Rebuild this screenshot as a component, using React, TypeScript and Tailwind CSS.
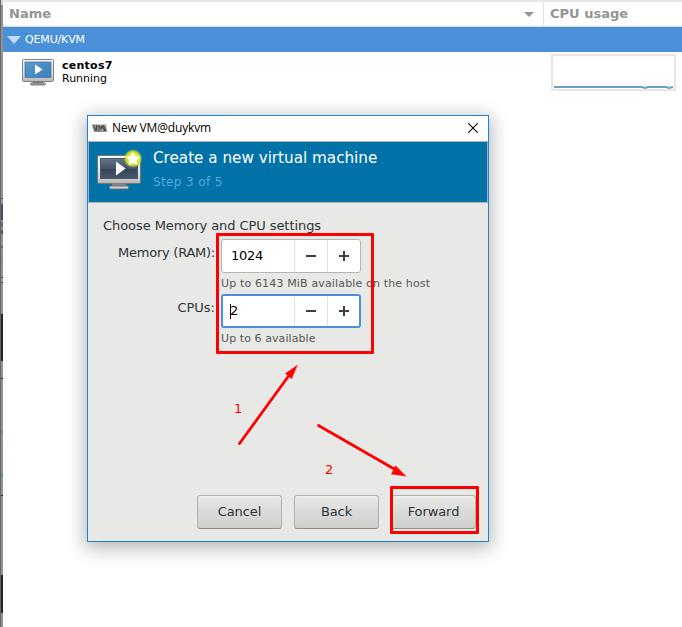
import React from "react";

const edgeMarks = [
  { top: 0, height: 5, color: "#d8d8d8" },
  { top: 198, height: 1, color: "#55555f" },
  { top: 204, height: 16, color: "#4a4b67" },
  { top: 222, height: 5, color: "#62647c" },
  { top: 230, height: 4, color: "#555773" },
  { top: 246, height: 2, color: "#64647b" },
  { top: 250, height: 17, color: "#858e97" },
  { top: 277, height: 1, color: "#1d4d68" },
  { top: 282, height: 1, color: "#1d4d68" },
  { top: 314, height: 47, color: "#252525" },
  { top: 378, height: 1, color: "#252525" },
  { top: 431, height: 3, color: "#5b8e98" },
  { top: 473, height: 4, color: "#5b8e98" },
  { top: 495, height: 1, color: "#252525" },
  { top: 575, height: 38, color: "#252525" },
];

function Monitor({ fresh = false }: { fresh?: boolean }) {
  return (
    <svg width={fresh ? 46 : 32} height={fresh ? 41 : 28} viewBox={fresh ? "0 0 46 41" : "0 0 32 28"} className="block shrink-0">
      <defs>
        <linearGradient id="bezel" x1="0" y1="0" x2="0" y2="1">
          <stop offset="0" stopColor="#f5f5f3" />
          <stop offset=".7" stopColor="#dddddc" />
          <stop offset="1" stopColor="#b4b4b2" />
        </linearGradient>
        <linearGradient id="dark" x1="0" y1="0" x2="0" y2="1">
          <stop offset="0" stopColor="#65758a" />
          <stop offset=".5" stopColor="#46536a" />
          <stop offset=".55" stopColor="#39465a" />
          <stop offset="1" stopColor="#46546a" />
        </linearGradient>
        <linearGradient id="blue" x1="0" y1="0" x2="1" y2="1">
          <stop offset="0" stopColor="#5b9bcc" />
          <stop offset="1" stopColor="#397eb9" />
        </linearGradient>
        <radialGradient id="glow">
          <stop offset=".45" stopColor="#f1ef35" />
          <stop offset=".75" stopColor="#d4df27" stopOpacity=".9" />
          <stop offset="1" stopColor="#a4c943" stopOpacity="0" />
        </radialGradient>
      </defs>
      {fresh ? (
        <>
          <rect x=".5" y="6.5" width="43" height="28" rx="1.5" fill="url(#bezel)" stroke="#73777b" />
          <rect x="3.5" y="9.500" width="37" height="20" fill="url(#dark)" stroke="#4a586c" />
          <path d="M19 12.500L28.5 19.500L19 26.500Z" fill="#fff" />
          <rect x="15" y="34.500" width="14" height="3" fill="#85878a" />
          <rect x="12.5" y="37" width="19" height="3" rx="1" fill="#d2d2d0" stroke="#6f7275" />
          <circle cx="36" cy="9.500" r="9.5" fill="url(#glow)" />
          <path d="M36 3.600L38 7.500L42.2 8.200L39.200 11.200L40 15.500L36 13.500L32 15.500L32.800 11.200L29.800 8.200L34 7.500Z" fill="#fffff4" stroke="#fffff4" strokeLinejoin="round" />
        </>
      ) : (
        <>
          <rect x=".5" y="1.5" width="31" height="22" rx="1.2" fill="url(#bezel)" stroke="#7f8182" />
          <rect x="3" y="4" width="26" height="15.5" fill="url(#blue)" stroke="#3d7bad" strokeWidth=".8" />
          <path d="M13 6.500L20.500 11.500L13 16.500Z" fill="#fff" />
          <rect x="11" y="23.5" width="10" height="2" fill="#777" />
          <rect x="8.5" y="25" width="15" height="2" rx="1" fill="#aaa" stroke="#777" />
        </>
      )}
    </svg>
  );
}

function Spin({ value, focused = false }: { value: string; focused?: boolean }) {
  return (
    <div className={`flex h-[34px] w-[140px] overflow-hidden rounded-[3px] bg-white ${focused ? "border-2 border-[#4a90d9]" : "border border-[#b6b6b3]"}`}>
      <div className={`flex flex-1 items-center text-[13px] tracking-[-0.3px] text-black ${focused ? "pl-[7px]" : "pl-[9px]"}`}>
        {focused && <span className="-mr-px h-[15px] w-px bg-black" />}
        {value}
      </div>
      <div className="flex w-[33px] items-center justify-center border-l border-[#e2e2e0]">
        <span className="h-[2px] w-[10px] bg-[#3b4347]" />
      </div>
      <div className={`flex items-center justify-center border-l border-[#e2e2e0] ${focused ? "w-[32px]" : "w-[33px]"}`}>
        <svg width="10" height="10" shapeRendering="crispEdges"><path d="M0 5H10M5 0V10" stroke="#3b4347" strokeWidth="2" /></svg>
      </div>
    </div>
  );
}

function Button({ children }: { children: string }) {
  return (
    <button className="h-[34px] w-[85px] rounded-[3px] border border-[#b0b0ad] border-b-[#8f8f8c] bg-linear-to-b from-[#e8e8e6] to-[#cececc] pb-[2px] text-[13px] leading-none tracking-[-0.1px] text-[#2e3436] shadow-[inset_0_1px_0_#f1f1ef]">
      {children}
    </button>
  );
}

function Dialog() {
  return (
    <section className="absolute left-[87px] top-[115px] flex h-[427px] w-[402px] flex-col border border-[#1883d7] bg-[#e8e8e6] shadow-[0_4px_18px_2px_rgba(0,0,0,0.3)]">
      <div className="flex h-[25px] items-center bg-white pb-px pl-[4px] pr-[10px]">
        <svg width="15" height="9" viewBox="0 0 15 9" className="mr-[5px] shrink-0">
          <path d="M0 .5H14L15 8H2Z" fill="#929292" />
          <path d="M1 1L4 7L5 1M7 7V2L9 5L10 2L13 7M11 1L14 7" stroke="#3b3b3b" fill="none" />
          <path d="M6 3L8 6" stroke="#a66b70" />
        </svg>
        <span className="flex-1 font-['Open_Sans','Noto_Sans',sans-serif] text-[12px] leading-none tracking-[-0.15px] text-black">New VM@duykvm</span>
        <svg width="10" height="10"><path d="M.3 .3L9.7 9.7M9.7 .3L.3 9.7" stroke="#000" strokeWidth="1.1" /></svg>
      </div>
      <header className="flex h-[62px] border border-[#a9b3b4] bg-[#0072a8] pl-[8px] pt-[7px]">
        <Monitor fresh />
        <div className="ml-[10px]">
          <h1 className="mt-[-1px] text-[15.2px] leading-[20px] text-white">Create a new virtual machine</h1>
          <p className="mt-[6px] text-[12px] leading-[16px] tracking-[0.38px] text-[#58aada]">Step 3 of 5</p>
        </div>
      </header>
      <div className="flex flex-1 flex-col pl-[15px] pt-[15px]">
        <p className="h-[16px] text-[13px] leading-[16px] tracking-[-0.07px]">Choose Memory and CPU settings</p>
        <div className="mt-[5px] grid grid-cols-[112px_auto] gap-x-[6px]">
          <label className="pt-[6px] text-right text-[13px] leading-[16px] tracking-[-0.25px]">Memory (RAM):</label>
          <Spin value="1024" />
          <p className="col-start-2 h-[21px] whitespace-nowrap pt-[3px] text-[11px] leading-[16px] tracking-[0.15px] text-[#555857]">Up to 6143 MiB available on the host</p>
          <label className="pt-[6px] text-right text-[13px] leading-[16px]">CPUs:</label>
          <Spin value="2" focused />
          <p className="col-start-2 pt-[3px] text-[11px] leading-[16px] tracking-[0.08px] text-[#555857]">Up to 6 available</p>
        </div>
      </div>
      <footer className="flex justify-end gap-[12px] pb-[12px] pr-[12px]">
        <Button>Cancel</Button>
        <Button>Back</Button>
        <Button>Forward</Button>
      </footer>
    </section>
  );
}

export default function App() {
  return (
    <div className="relative flex h-[627px] w-[682px] overflow-hidden bg-white font-['DejaVu_Sans',sans-serif] text-[#2e3436]">
      <aside className="relative w-[3px] shrink-0 border-l border-[#666] bg-[#929292]">
        {edgeMarks.map((m) => (
          <span key={m.top} className="absolute left-0 w-[2px]" style={{ top: m.top, height: m.height, backgroundColor: m.color }} />
        ))}
      </aside>
      <main className="flex flex-1 flex-col">
        <div className="flex h-[27px] border-b border-t-2 border-b-[#d9d9d7] border-t-[#e8e8e6] text-[13px] font-bold leading-[23px] text-[#929595]">
          <div className="flex flex-1 items-center justify-between border-r border-[#e2e2e0] pl-[6px] pr-[9px]">
            <span className="-mt-px">Name</span>
            <svg width="10" height="5"><path d="M0 0H10L5 5Z" fill="#929595" /></svg>
          </div>
          <div className="w-[138px] pl-[6px]">CPU usage</div>
        </div>
        <div className="flex h-[25px] items-center bg-[#4a90d9] pl-[4px] text-[11px] tracking-[-0.15px] text-white">
          <svg width="14" height="8" className="mr-[4px]"><path d="M0 0H14L7 8Z" fill="#c3dcf4" /></svg>
          <span className="pt-[2px]">QEMU/KVM</span>
        </div>
        <div className="flex pl-[19px] pt-[6px]">
          <Monitor />
          <div className="ml-[8px] flex-1 pt-px text-[11px] leading-[13px] text-black">
            <p className="font-bold tracking-[0.25px]">centos7</p>
            <p>Running</p>
          </div>
          <div className="-mt-[4px] mr-[6px] flex h-[37px] w-[125px] items-end border-2 border-[#e9e4e5] pl-px">
            <svg width="119" height="3"><path d="M0 1H88L91 2L94 1H112L115 2L119 1" fill="none" stroke="#68a4bf" strokeWidth="2" /></svg>
          </div>
        </div>
      </main>
      <Dialog />
      <div className="absolute left-[216px] top-[233px] h-[121px] w-[158px] rounded-[1px] border-[3px] border-[#f00]" />
      <div className="absolute left-[390px] top-[486px] h-[48px] w-[89px] rounded-[1px] border-[3px] border-[#f00]" />
      <svg className="absolute left-0 top-0" width="682" height="627">
        <g stroke="#f00" strokeWidth="2.8" strokeLinecap="round" fill="#f00">
          <path d="M239.5 443.5L290 374" />
          <path d="M318.5 425.5L396 470" />
          <path d="M297 365.500L285.500 373.500L291.500 378.500Z" strokeWidth=".6" />
          <path d="M405.500 476L391.500 474L395.500 466Z" strokeWidth=".6" />
        </g>
      </svg>
      <span className="absolute left-[234px] top-[401px] text-[13px] leading-[16px] text-[#f00]">1</span>
      <span className="absolute left-[325px] top-[462px] text-[13px] leading-[16px] text-[#f00]">2</span>
    </div>
  );
}
